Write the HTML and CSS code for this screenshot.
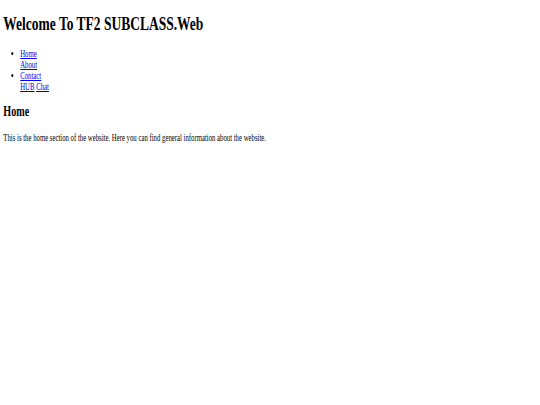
FILE: index.html
```html
<!DOCTYPE html>
<html>
<head>
<meta charset="utf-8">
<title>TF2 SUBCLASS.Web</title>
<link rel="stylesheet" href="styles.css">
</head>
<body>
<div class="page">
  <h1 class="title">Welcome To TF2 SUBCLASS.Web</h1>
  <ul class="nav">
    <li><a href="#home">Home</a><br><a href="#about">About</a></li>
    <li><a href="#contact">Contact</a><br><a href="#hub">HUB</a> <a href="#chat">Chat</a></li>
  </ul>
  <section class="section">
    <h2 class="section-title">Home</h2>
    <p class="section-text">This is the home section of the website. Here you can find general information about the website.</p>
  </section>
</div>
</body>
</html>
```
FILE: styles.css
```css
html, body {
  margin: 0;
  padding: 0;
  background: #ffffff;
}
.page {
  box-sizing: border-box;
  width: 540px;
  padding: 0 4.8px;
  font-family: "Liberation Serif", "Times New Roman", serif;
  font-size: 9.6px;
  color: #000000;
  transform: scaleX(0.703);
  transform-origin: 0 0;
  display: flow-root;
}
.title {
  font-size: 2em;
  font-weight: bold;
  margin: 0.67em 0;
}
.nav {
  margin: 1em 0;
  padding-left: 24px;
}
.nav a {
  color: #0000ee;
}
.section-title {
  font-size: 1.5em;
  font-weight: bold;
  margin: 11px 0 12px;
}
.section-text {
  margin: 1em 0;
}
```
